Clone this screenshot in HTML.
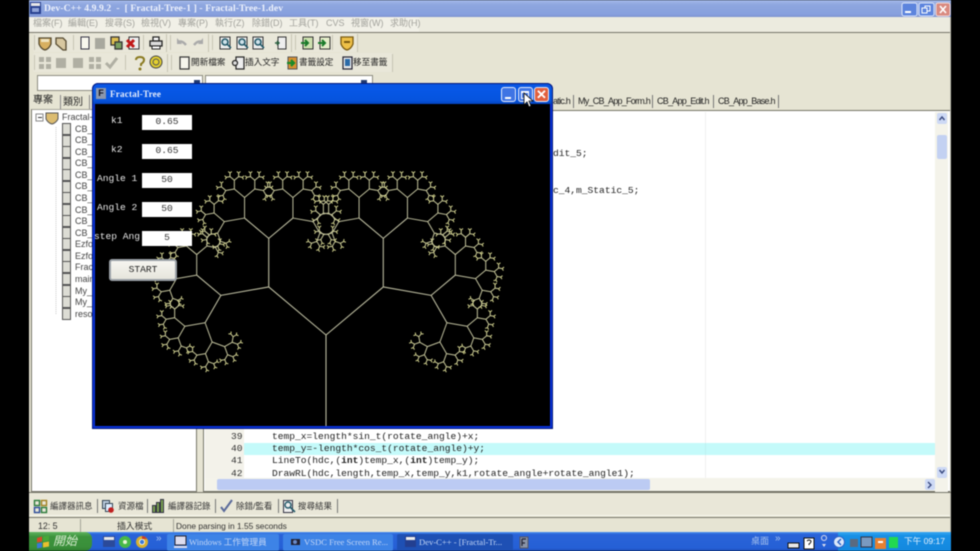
<!DOCTYPE html>
<html><head><meta charset="utf-8"><title>Dev-C++</title>
<style>
html,body{margin:0;padding:0;background:#000;width:980px;height:551px;overflow:hidden}
#r{position:absolute;left:0;top:0;width:980px;height:551px;overflow:hidden;font-family:"Liberation Sans","Noto Sans CJK TC",sans-serif;filter:blur(.4px)}
#r div,#r span{position:absolute;white-space:nowrap}
.b{display:block}
.m{font-size:9px;color:#a2a29c;top:17px;line-height:13px}
.tb{font-size:8.6px;color:#222;top:56px;line-height:13px}
.et{font-size:9px;letter-spacing:-.75px;color:#222;top:95px;line-height:13px}
.tr{font-size:9px;color:#444;left:75px;line-height:11px}
.code{font-family:"Liberation Mono",monospace;font-size:9.6px;color:#222;line-height:12px}
.ln{font-family:"Liberation Mono",monospace;font-size:9.6px;color:#333;line-height:12px;left:231px}
.bt{font-size:8.5px;color:#333;top:500px;line-height:13px}
.st{font-size:8.8px;color:#333;top:520px;line-height:13px}
.task{top:534px;height:17px;background:#3d83e6;border-radius:2px;color:#c3d6f6;font-size:8.6px;line-height:17px;font-family:"Liberation Serif","Noto Sans CJK TC",serif}
.inp{left:142px;width:50px;height:15px;background:#fff;color:#333;font-family:"Liberation Mono",monospace;font-size:9.6px;line-height:14px;text-align:center}
.lab{color:#e8e8e8;font-family:"Liberation Mono",monospace;font-size:9.6px;line-height:12px}
.wb{width:15px;height:15px;border:1px solid #e8eefc;border-radius:3px;box-sizing:border-box;top:87px}
</style></head><body><div id="r">

<!-- main app window -->
<div style="left:29px;top:0;width:922px;height:533px;background:#e6e4d3"></div>
<div style="left:29px;top:0;width:922px;height:17px;background:linear-gradient(#a3b8e8,#8ea6df 30%,#87a0de 85%,#7d92cf)"></div>
<div style="left:29px;top:17px;width:922px;height:15px;background:#ecebdf"></div>
<div style="left:29px;top:17px;width:390px;height:15px;background:#f1f0e7"></div>
<div style="left:29px;top:32px;width:922px;height:1px;background:#77766a"></div>
<div style="left:950px;top:17px;width:1px;height:516px;background:#bdbcb0"></div>

<div style="left:44px;top:2px;font-size:9.6px;line-height:13px;color:#eef2fc;font-family:'Liberation Serif',serif;font-weight:bold;letter-spacing:.1px">Dev-C++ 4.9.9.2 &nbsp;- &nbsp;[ Fractal-Tree-1 ] - Fractal-Tree-1.dev</div>

<span class="m" style="left:33px">檔案(F)</span><span class="m" style="left:68px">編輯(E)</span><span class="m" style="left:105px">搜尋(S)</span><span class="m" style="left:141px">檢視(V)</span><span class="m" style="left:178px">專案(P)</span><span class="m" style="left:215px">執行(Z)</span><span class="m" style="left:252px">除錯(D)</span><span class="m" style="left:289px">工具(T)</span><span class="m" style="left:326px">CVS</span><span class="m" style="left:351px">視窗(W)</span><span class="m" style="left:390px">求助(H)</span>

<!-- toolbar backgrounds -->
<div style="left:33px;top:33px;width:324px;height:19px;background:#e9e7d9;border-radius:2px"></div>
<div style="left:33px;top:53px;width:360px;height:19px;background:#e9e7d9;border-radius:2px"></div>

<span class="tb" style="left:191px">開新檔案</span><span class="tb" style="left:245px">插入文字</span><span class="tb" style="left:299px">書籤設定</span><span class="tb" style="left:353px">移至書籤</span>

<!-- combos -->
<div style="left:37px;top:75px;width:166px;height:16px;background:#fff;border:1px solid #8d8c80;box-sizing:border-box"></div>
<div style="left:205px;top:75px;width:168px;height:16px;background:#fff;border:1px solid #8d8c80;box-sizing:border-box"></div>

<!-- left panel -->
<div style="left:31px;top:109px;width:166px;height:383px;background:#fff;border:1px solid #77766a;border-top-color:#a5a498;box-sizing:border-box"></div>
<span style="left:33px;top:94px;font-size:10px;line-height:14px;color:#222">專案</span>
<span style="left:63px;top:96px;font-size:10px;line-height:14px;color:#222">類別</span>
<div style="left:60px;top:95px;width:1px;height:14px;background:#888"></div>
<div style="left:89px;top:95px;width:1px;height:14px;background:#888"></div>

<span class="tr" style="top:112px;left:62px;">Fractal-Tree-1</span>
<span class="tr" style="top:124px">CB_App</span><span class="tr" style="top:135px">CB_App</span><span class="tr" style="top:147px">CB_App</span><span class="tr" style="top:158px">CB_App</span><span class="tr" style="top:170px">CB_App</span><span class="tr" style="top:181px">CB_App</span><span class="tr" style="top:193px">CB_App</span><span class="tr" style="top:205px">CB_App</span><span class="tr" style="top:216px">CB_App</span><span class="tr" style="top:228px">CB_App</span><span class="tr" style="top:239px">Ezform</span><span class="tr" style="top:251px">Ezform</span><span class="tr" style="top:262px">Fractal</span><span class="tr" style="top:274px">main.c</span><span class="tr" style="top:286px">My_CB</span><span class="tr" style="top:297px">My_CB</span><span class="tr" style="top:309px">resource</span>

<!-- editor -->
<div style="left:203px;top:110px;width:747px;height:382px;background:#fff;border:1px solid #77766a;border-right:0;border-bottom-color:#6f6e62;box-sizing:border-box"></div>
<div style="left:205px;top:112px;width:39px;height:366px;background:#f3f2ea"></div>
<div style="left:705px;top:112px;width:1px;height:366px;background:#efefef"></div>
<div style="left:244px;top:443px;width:691px;height:12px;background:#c4fafa"></div>
<div style="left:705px;top:443px;width:1px;height:12px;background:#bdf0f0"></div>
<div style="left:553px;top:148px" class="code">dit_5;</div>
<div style="left:553px;top:185px" class="code">c_4,m_Static_5;</div>
<div class="ln" style="top:431px">39</div><div class="ln" style="top:443px">40</div><div class="ln" style="top:455px">41</div><div class="ln" style="top:468px">42</div>
<div class="code" style="left:272px;top:431px">temp_x=length*sin_t(rotate_angle)+x;</div>
<div class="code" style="left:272px;top:443px">temp_y=-length*cos_t(rotate_angle)+y;</div>
<div class="code" style="left:272px;top:455px">LineTo(hdc,(<b>int</b>)temp_x,(<b>int</b>)temp_y);</div>
<div class="code" style="left:272px;top:468px">DrawRL(hdc,length,temp_x,temp_y,k1,rotate_angle+rotate_angle1);</div>

<!-- editor tabs -->
<span class="et" style="left:553px">atic.h</span><span class="et" style="left:578px">My_CB_App_Form.h</span><span class="et" style="left:657px">CB_App_Edit.h</span><span class="et" style="left:718px">CB_App_Base.h</span>
<div style="left:573px;top:95px;width:1px;height:13px;background:#777"></div>
<div style="left:652px;top:95px;width:1px;height:13px;background:#777"></div>
<div style="left:713px;top:95px;width:1px;height:13px;background:#777"></div>
<div style="left:778px;top:95px;width:1px;height:13px;background:#777"></div>

<!-- scrollbars -->
<div style="left:935px;top:112px;width:13px;height:380px;background:#f4f3ea"></div>
<div style="left:205px;top:478px;width:743px;height:13px;background:#f4f3ea"></div>
<div style="left:937px;top:113px;width:10px;height:11px;background:#cdd9f5;border-radius:2px"></div>
<div style="left:937px;top:135px;width:10px;height:24px;background:#c3d1f2;border-radius:2px"></div>
<div style="left:937px;top:467px;width:10px;height:11px;background:#cdd9f5;border-radius:2px"></div>
<div style="left:217px;top:479px;width:433px;height:11px;background:#bccbf3;border-radius:2px"></div>
<div style="left:925px;top:479px;width:10px;height:11px;background:#cdd9f5;border-radius:2px"></div>

<!-- bottom tabs / status -->
<div style="left:29px;top:492px;width:922px;height:1px;background:#77766a"></div>
<div style="left:29px;top:493px;width:921px;height:22px;background:#e9e7d8"></div>
<div style="left:29px;top:515px;width:921px;height:1px;background:#f8f7ee"></div>
<div style="left:29px;top:517px;width:921px;height:1px;background:#77766a"></div>
<span class="bt" style="left:50px">編譯器訊息</span><span class="bt" style="left:118px">資源檔</span><span class="bt" style="left:168px">編譯器記錄</span><span class="bt" style="left:236px">除錯/監看</span><span class="bt" style="left:298px">搜尋結果</span>
<div style="left:97px;top:499px;width:1px;height:14px;background:#777"></div>
<div style="left:147px;top:499px;width:1px;height:14px;background:#777"></div>
<div style="left:215px;top:499px;width:1px;height:14px;background:#777"></div>
<div style="left:278px;top:499px;width:1px;height:14px;background:#777"></div>
<div style="left:337px;top:499px;width:1px;height:14px;background:#777"></div>
<span class="st" style="left:38px">12: 5</span><span class="st" style="left:117px">插入模式</span><span class="st" style="left:176px;font-size:8.4px">Done parsing in 1.55 seconds</span>
<div style="left:80px;top:519px;width:1px;height:13px;background:#a5a498"></div>
<div style="left:173px;top:519px;width:1px;height:13px;background:#a5a498"></div>

<!-- taskbar -->
<div style="left:29px;top:532px;width:922px;height:19px;background:linear-gradient(#4d93f0,#2a63d8 12%,#2560d6 85%,#1d4db5)"></div>
<div style="left:29px;top:532px;width:63px;height:19px;background:linear-gradient(#5fb35f,#3c933c 25%,#3a8f3a 80%,#2e7a2e);border-radius:0 7px 7px 0"></div>
<span style="left:53px;top:533px;font-size:12px;line-height:16px;color:#d8ecd0;font-style:italic">開始</span>
<div class="task" style="left:167px;width:112px;text-indent:22px">Windows 工作管理員</div>
<div class="task" style="left:283px;width:110px;text-indent:21px">VSDC Free Screen Re...</div>
<div class="task" style="left:397px;width:116px;text-indent:22px;background:#1e50b4">Dev-C++ - [Fractal-Tr...</div>
<div style="left:838px;top:532px;width:113px;height:19px;background:linear-gradient(#37a6f2,#1790e6 20%,#1488de)"></div>
<span style="left:751px;top:535px;font-size:9px;line-height:13px;color:#a9c4ee">桌面</span>
<span style="left:775px;top:532px;font-size:10px;line-height:13px;color:#a9c4ee">»</span>
<span style="left:904px;top:535px;font-size:8.6px;line-height:13px;color:#e4f0fc">下午 09:17</span>
<span style="left:156px;top:532px;font-size:10px;line-height:13px;color:#a9c4ee">»</span>

<!-- chrome icons -->
<svg class="b" style="position:absolute;left:0;top:0" width="980" height="551" viewBox="0 0 980 551">
 <!-- app icon -->
 <rect x="30" y="2" width="11" height="12" fill="#27408f"/><rect x="31" y="3" width="9" height="3" fill="#e8e8e8"/><rect x="32" y="8" width="7" height="4" fill="#8fa3d8"/>
 <!-- title buttons -->
 <rect x="902" y="3" width="15" height="13" rx="2" fill="#5c84dd" stroke="#dde6fa"/><rect x="905" y="11" width="6" height="2" fill="#fff"/>
 <rect x="919" y="3" width="15" height="13" rx="2" fill="#5c84dd" stroke="#dde6fa"/><rect x="925" y="6" width="5" height="5" fill="none" stroke="#fff"/><rect x="922" y="8" width="5" height="5" fill="#5c84dd" stroke="#fff"/>
 <rect x="936" y="3" width="14" height="13" rx="2" fill="#d98a80" stroke="#f0dcdc"/><path d="M940 6l6 7m0-7l-6 7" stroke="#fff" stroke-width="1.6"/>
 <!-- toolbar separators -->
 <g fill="#c6c4b4">
  <rect x="34" y="35" width="1" height="15"/><rect x="73" y="35" width="1" height="15"/><rect x="143" y="35" width="1" height="15"/><rect x="166" y="34" width="1" height="18"/><rect x="170" y="35" width="1" height="15"/><rect x="208" y="34" width="1" height="18"/><rect x="212" y="35" width="1" height="15"/><rect x="291" y="34" width="1" height="18"/><rect x="295" y="35" width="1" height="15"/><rect x="332" y="35" width="1" height="15"/><rect x="357" y="34" width="1" height="18"/>
  <rect x="34" y="55" width="1" height="15"/><rect x="125" y="55" width="1" height="15"/><rect x="167" y="54" width="1" height="18"/><rect x="171" y="55" width="1" height="15"/><rect x="392" y="54" width="1" height="18"/>
 </g>
 <!-- row 1 -->
 <path d="M39 38h12v6q-2 5-6 6q-4-1-6-6z" fill="#d8b060" stroke="#554a30" stroke-width="1.3"/><path d="M41 39h8v3h-8z" fill="#f0e4c0"/>
 <path d="M56 38h7l3 3v9h-3l-7-6z" fill="#d8c8a0" stroke="#554a30" stroke-width="1.3"/>
 <rect x="81" y="37" width="8" height="12" fill="#f8f7ee" stroke="#334"/>
 <rect x="95" y="38" width="10" height="11" fill="#a8a89e"/>
 <rect x="111" y="37" width="8" height="8" fill="#e0c050" stroke="#333" stroke-width="1.3"/><rect x="115" y="42" width="7" height="7" fill="#7aa060" stroke="#333" stroke-width="1.3"/>
 <rect x="129" y="37" width="10" height="12" fill="#eee" stroke="#333"/><path d="M127 40l7 7m0-7l-7 7" stroke="#c01818" stroke-width="3"/>
 <path d="M153 37h6v4h-6z" fill="#fff" stroke="#222" stroke-width="1.300"/><rect x="150" y="41" width="12" height="5" fill="#ddd" stroke="#222" stroke-width="1.300"/><rect x="152" y="46" width="8" height="3" fill="#fff" stroke="#222"/>
 <path d="M186 45q-4-5-8-3" stroke="#aaa" stroke-width="2.400" fill="none"/><path d="M177 38v6h5z" fill="#aaa"/>
 <path d="M194 45q4-5 8-3" stroke="#aaa" stroke-width="2.400" fill="none"/><path d="M203 38v6h-5z" fill="#aaa"/>
 <g fill="#eee" stroke="#333"><rect x="220" y="37" width="10" height="12"/><rect x="237" y="37" width="10" height="12"/><rect x="253" y="37" width="10" height="12"/><rect x="278" y="37" width="8" height="12"/></g>
 <g fill="#cfe2ea" stroke="#245a6a" stroke-width="1.600"><circle cx="225" cy="42" r="3"/><path d="M227 44l4 4"/><circle cx="242" cy="42" r="3"/><path d="M244 44l4 4"/><circle cx="258" cy="42" r="3"/><path d="M260 44l4 4"/></g>
 <path d="M275 43h4m-2-2l2 2-2 2" stroke="#245a3a" fill="none" stroke-width="1.400"/>
 <rect x="303" y="37" width="10" height="12" fill="#cfe0b0" stroke="#333"/><path d="M301 43h7m-3-3l3 3-3 3" stroke="#1a7a2a" stroke-width="2" fill="none"/>
 <rect x="320" y="37" width="10" height="12" fill="#e6eecb" stroke="#333"/><path d="M318 43h7m-3-3l3 3-3 3" stroke="#1a7a2a" stroke-width="2" fill="none"/>
 <path d="M341 37h12v7q-2 5-6 6q-4-1-6-6z" fill="#eec048" stroke="#7a5a10" stroke-width="1.300"/><rect x="344" y="41" width="6" height="2" fill="#7a5a10"/>
 <!-- row 2 -->
 <g fill="#b0afa3"><rect x="39" y="57" width="5" height="5"/><rect x="46" y="57" width="5" height="5"/><rect x="39" y="64" width="5" height="5"/><rect x="46" y="64" width="5" height="5"/><rect x="56" y="58" width="10" height="10"/><rect x="73" y="58" width="10" height="10"/><rect x="89" y="57" width="5" height="5"/><rect x="96" y="57" width="5" height="5"/><rect x="89" y="64" width="5" height="5"/><rect x="96" y="64" width="5" height="5"/></g>
 <path d="M106 63l4 4 7-9" stroke="#b0afa3" stroke-width="3" fill="none"/>
 <path d="M136 60q0-3 4-3t4 3q0 2-3 4v2" stroke="#8a7a20" stroke-width="2" fill="none"/><circle cx="140" cy="69" r="1.500" fill="#8a7a20"/>
 <circle cx="156" cy="62" r="6" fill="#e4d030" stroke="#444"/><circle cx="156" cy="62" r="3" fill="none" stroke="#555"/>
 <rect x="180" y="57" width="9" height="12" fill="#f6f5ec" stroke="#333" stroke-width="1.200"/>
 <rect x="236" y="57" width="8" height="12" fill="#eee" stroke="#222" stroke-width="1.200"/><circle cx="235" cy="63" r="2.500" fill="#ddd" stroke="#222" stroke-width="1.200"/>
 <rect x="288" y="57" width="9" height="12" fill="#d89030" stroke="#555"/><path d="M287 63h7m-3-3l3 3-3 3" stroke="#1a8a2a" stroke-width="2.200" fill="none"/>
 <rect x="343" y="57" width="9" height="12" fill="#e8e8e8" stroke="#223" stroke-width="1.200"/><rect x="345" y="59" width="5" height="7" fill="#2a6aa8"/>
 <!-- combo arrow -->
 <rect x="194" y="80" width="6" height="3" fill="#223a70"/><rect x="361" y="80" width="6" height="3" fill="#223a70"/>
 <!-- tree -->
 <rect x="36" y="114" width="7" height="7" fill="#fff" stroke="#888"/><path d="M38 117.500h4" stroke="#333"/>
 <path d="M46 113h12v6q-2 4-6 5q-4-1-6-5z" fill="#dcbc70" stroke="#555"/>
 <path d="M56 127v187" stroke="#ccc" stroke-dasharray="1 1"/>
 <g fill="#dcdcd4" stroke="#555">
  <rect x="62.500" y="123.500" width="8" height="11"/><rect x="62.500" y="135.500" width="8" height="11"/><rect x="62.500" y="146.500" width="8" height="11"/><rect x="62.500" y="158.500" width="8" height="11"/><rect x="62.500" y="169.500" width="8" height="11"/><rect x="62.500" y="181.500" width="8" height="11"/><rect x="62.500" y="192.500" width="8" height="11"/><rect x="62.500" y="204.500" width="8" height="11"/><rect x="62.500" y="215.500" width="8" height="11"/><rect x="62.500" y="227.500" width="8" height="11"/><rect x="62.500" y="238.500" width="8" height="11"/><rect x="62.500" y="250.500" width="8" height="11"/><rect x="62.500" y="261.500" width="8" height="11"/><rect x="62.500" y="273.500" width="8" height="11"/><rect x="62.500" y="285.500" width="8" height="11"/><rect x="62.500" y="296.500" width="8" height="11"/><rect x="62.500" y="308.500" width="8" height="11"/>
 </g>
 <!-- scroll arrows -->
 <g fill="none" stroke="#3a4a80" stroke-width="1.4"><path d="M939.500 120l2.500-3 2.500 3"/><path d="M939.500 470l2.500 3 2.500-3"/><path d="M928 482l3 3-3 3"/></g>
 <!-- bottom tab icons -->
 <g fill="none" stroke-width="1.400"><rect x="34.500" y="500.500" width="5" height="5" stroke="#2a7a3a"/><rect x="41.500" y="500.500" width="5" height="5" stroke="#a08020"/><rect x="34.500" y="507.500" width="5" height="5" stroke="#2a4a9a"/><rect x="41.500" y="507.500" width="5" height="5" stroke="#2a7a3a"/></g>
 <rect x="102.500" y="500.500" width="7" height="8" fill="#bcd" stroke="#345"/><rect x="105.500" y="503.500" width="7" height="8" fill="#def" stroke="#345"/><circle cx="111" cy="510" r="2.800" fill="#c02020"/>
 <g fill="#7aa050" stroke="#334"><rect x="152.500" y="505.500" width="3" height="7"/><rect x="156.500" y="502.500" width="3" height="10"/><rect x="160.500" y="499.500" width="3" height="13"/></g>
 <path d="M221 507l3 4 8-11" stroke="#5a6a9a" stroke-width="2" fill="none"/>
 <rect x="283.500" y="500.500" width="9" height="12" fill="#eee" stroke="#334"/><circle cx="288" cy="505" r="3" fill="none" stroke="#245a6a" stroke-width="1.400"/><path d="M290 507l5 5" stroke="#245a6a" stroke-width="1.600"/>
 <!-- taskbar icons -->
 <path d="M37 538l5-1.500v5l-5 1z" fill="#d84a28"/><path d="M43 536.500l6-1v5l-6 1z" fill="#48a838"/><path d="M37 543.500l5-1v5l-5 1z" fill="#3a78d8"/><path d="M43 542.500l6-1v5l-6 1z" fill="#e8c030"/>
 <rect x="103" y="536" width="12" height="11" fill="#2b4a9a"/><rect x="104" y="537" width="10" height="3" fill="#e8e8e8"/>
 <circle cx="125" cy="542" r="6" fill="#48b848"/><circle cx="125" cy="542" r="2" fill="#e8f4d8"/>
 <circle cx="142" cy="542" r="6" fill="#d8b030"/><path d="M142 536a6 6 0 0 1 5 3h-5z" fill="#c83a2a"/><circle cx="142" cy="542" r="2.600" fill="#3a7ad8" stroke="#fff" stroke-width=".8"/>
 <rect x="175" y="536" width="11" height="9" fill="#dde" stroke="#223"/><rect x="174" y="546" width="13" height="2" fill="#dde"/>
 <rect x="291" y="539" width="9" height="6" fill="#223"/><circle cx="295" cy="542" r="2" fill="#6a8ac8"/>
 <rect x="405" y="536" width="11" height="11" fill="#233f90"/><rect x="406" y="537" width="9" height="3" fill="#eee"/>
 <rect x="520" y="537" width="8" height="11" fill="#8a94a8" stroke="#556"/><path d="M522 539h4m-4 0v7m0-3h3" stroke="#223" stroke-width="1.200" fill="none"/>
 <rect x="788" y="543" width="11" height="5" fill="#e8e8e8" stroke="#111"/><rect x="804" y="538" width="10" height="11" fill="#fff" stroke="#111"/><path d="M807 541q2-2 4 0q0 2-2 3v1" stroke="#111" fill="none"/>
 <circle cx="824" cy="538" r="2.500" fill="none" stroke="#dde"/><path d="M822 544l2 3 2-3z" fill="#dde"/>
 <circle cx="839" cy="542" r="5.500" fill="#dce8fa" stroke="#2a62c8"/><path d="M841 539l-3 3 3 3" stroke="#2a62c8" stroke-width="1.500" fill="none"/>
 <rect x="850" y="539" width="8" height="8" fill="#5a6a80"/><rect x="861" y="537" width="11" height="10" fill="#7a9ac0" stroke="#334"/>
 <rect x="875" y="538" width="11" height="11" fill="#e88030"/><rect x="878" y="541" width="5" height="2" fill="#fff"/>
 <rect x="889" y="537" width="9" height="11" fill="#22d850"/>
</svg>

<!-- Fractal window -->
<div style="left:92px;top:83px;width:461px;height:346px;background:#0831d9;border-radius:6px 6px 0 0;box-shadow:inset 0 0 0 1px #03187a"></div>
<div style="left:93px;top:84px;width:459px;height:20px;background:linear-gradient(#0a55e2,#0757e6 30%,#0654de 80%,#0444c0);border-radius:5px 5px 0 0"></div>
<div style="left:96px;top:88px;width:10px;height:11px;background:#8c97ac;color:#112;font:bold 9px/11px 'Liberation Sans',sans-serif;text-align:center">F</div>
<div style="left:110px;top:88px;color:#e8eefc;font:bold 9px/13px 'Liberation Serif',serif;letter-spacing:.25px">Fractal-Tree</div>
<div class="wb" style="left:501px;background:#3f74e4"></div><div style="left:505px;top:97px;width:6px;height:2px;background:#fff"></div>
<div class="wb" style="left:518px;background:#3f74e4"></div><div style="left:521px;top:91px;width:8px;height:8px;border:1.500px solid #fff;border-top-width:2.500px;box-sizing:border-box"></div>
<div class="wb" style="left:534px;background:#e2603e"></div>

<!-- canvas -->
<div style="left:95px;top:104px;width:455px;height:322px;background:#000;overflow:hidden">
<svg class="b" width="455" height="322" viewBox="95 104 455 322">
<defs>
<g id="t9"><line y2="-2.38" stroke="#d6d690" stroke-width="1"/></g>
<g id="t8"><line y2="-3.66" stroke="#d0d098" stroke-width="1"/><use href="#t9" transform="translate(0,-3.66) rotate(50)"/><use href="#t9" transform="translate(0,-3.66) rotate(-50)"/></g>
<g id="t7"><line y2="-5.64" stroke="#c8c89a" stroke-width="1"/><use href="#t8" transform="translate(0,-5.64) rotate(50)"/><use href="#t8" transform="translate(0,-5.64) rotate(-50)"/></g>
<g id="t6"><line y2="-8.67" stroke="#c4c49c" stroke-width="1"/><use href="#t7" transform="translate(0,-8.67) rotate(50)"/><use href="#t7" transform="translate(0,-8.67) rotate(-50)"/></g>
<g id="t5"><line y2="-13.34" stroke="#c0c09c" stroke-width="1"/><use href="#t6" transform="translate(0,-13.34) rotate(50)"/><use href="#t6" transform="translate(0,-13.34) rotate(-50)"/></g>
<g id="t4"><line y2="-20.53" stroke="#bcbc9c" stroke-width="1"/><use href="#t5" transform="translate(0,-20.53) rotate(50)"/><use href="#t5" transform="translate(0,-20.53) rotate(-50)"/></g>
<g id="t3"><line y2="-31.58" stroke="#bcbca0" stroke-width="1.100"/><use href="#t4" transform="translate(0,-31.58) rotate(50)"/><use href="#t4" transform="translate(0,-31.58) rotate(-50)"/></g>
<g id="t2"><line y2="-48.59" stroke="#bcbca0" stroke-width="1.100"/><use href="#t3" transform="translate(0,-48.59) rotate(50)"/><use href="#t3" transform="translate(0,-48.59) rotate(-50)"/></g>
<g id="t1"><line y2="-74.75" stroke="#bcbca0" stroke-width="1.100"/><use href="#t2" transform="translate(0,-74.75) rotate(50)"/><use href="#t2" transform="translate(0,-74.75) rotate(-50)"/></g>
<g id="t0"><line y2="-115" stroke="#bcbca0" stroke-width="1.100"/><use href="#t1" transform="translate(0,-115) rotate(50)"/><use href="#t1" transform="translate(0,-115) rotate(-50)"/></g>
</defs>
<use href="#t0" transform="translate(326,450)"/>
</svg>
</div>

<div class="lab" style="left:111px;top:115px">k1</div>
<div class="lab" style="left:111px;top:144px">k2</div>
<div class="lab" style="left:97px;top:173px">Angle 1</div>
<div class="lab" style="left:97px;top:202px">Angle 2</div>
<div class="lab" style="left:94px;top:231px">step Ang</div>
<div class="inp" style="top:115px">0.65</div>
<div class="inp" style="top:144px">0.65</div>
<div class="inp" style="top:173px">50</div>
<div class="inp" style="top:202px">50</div>
<div class="inp" style="top:231px">5</div>
<div style="left:109px;top:259px;width:68px;height:22px;box-sizing:border-box;background:linear-gradient(#f6f5f0,#e6e5dc);border:2px solid #9aa0a6;border-radius:3px;color:#222;font:9.6px/18px 'Liberation Mono',monospace;text-align:center">START</div>

<svg class="b" style="position:absolute;left:520px;top:90px" width="14" height="20" viewBox="0 0 14 20"><path d="M4 3v12l3-3 2 5 2-1-2-5h4z" fill="#fff" stroke="#000" stroke-width=".8"/></svg>
<div style="left:534px;top:87px;width:15px;height:15px;color:#fff;font:bold 13px/15px 'Liberation Sans',sans-serif;text-align:center">✕</div>

</div></body></html>
